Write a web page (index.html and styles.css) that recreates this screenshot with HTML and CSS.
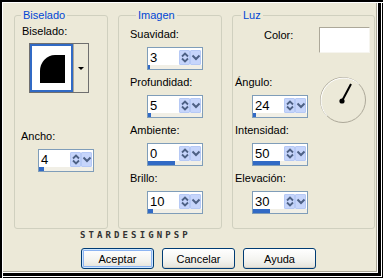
FILE: index.html
```html
<!DOCTYPE html>
<html lang="es">
<head>
    <meta charset="UTF-8">
    <title>Biselado interior</title>
    <link rel="stylesheet" href="styles.css">
</head>
<body>
    <div class="window">
        <div class="groups">
            <!-- Biselado -->
            <fieldset class="group group-bevel">
                <legend>Biselado</legend>
                <div class="label bevel-label">Biselado:</div>
                <div class="preview">
                    <div class="preview-swatch"><div class="bevel-shape"></div></div>
                    <div class="preview-drop"><span class="drop-arrow"></span></div>
                </div>
                <div class="item width-item">
                    <div class="label">Ancho:</div>
                    <div class="spin">
                        <div class="spin-top">
                            <span class="spin-value">4</span>
                            <span class="spin-btn"><svg width="10" height="15" viewBox="0 0 10 15"><path d="M2 6.5L5 3.5L8 6.5M2 8.5L5 11.5L8 8.5" fill="none" stroke="#4d6185" stroke-width="1.8"/></svg></span>
                            <span class="spin-btn"><svg width="10" height="15" viewBox="0 0 10 15"><path d="M1.5 5.5L5 9L8.5 5.5" fill="none" stroke="#4d6185" stroke-width="2"/></svg></span>
                        </div>
                        <div class="spin-track"><div class="spin-fill" style="width:5px"></div></div>
                    </div>
                </div>
            </fieldset>

            <!-- Imagen -->
            <fieldset class="group group-image">
                <legend>Imagen</legend>
                <div class="item">
                    <div class="label">Suavidad:</div>
                    <div class="spin">
                        <div class="spin-top">
                            <span class="spin-value">3</span>
                            <span class="spin-btn"><svg width="10" height="15" viewBox="0 0 10 15"><path d="M2 6.5L5 3.5L8 6.5M2 8.5L5 11.5L8 8.5" fill="none" stroke="#4d6185" stroke-width="1.8"/></svg></span>
                            <span class="spin-btn"><svg width="10" height="15" viewBox="0 0 10 15"><path d="M1.5 5.5L5 9L8.5 5.5" fill="none" stroke="#4d6185" stroke-width="2"/></svg></span>
                        </div>
                        <div class="spin-track"><div class="spin-fill" style="width:2px"></div></div>
                    </div>
                </div>
                <div class="item">
                    <div class="label">Profundidad:</div>
                    <div class="spin">
                        <div class="spin-top">
                            <span class="spin-value">5</span>
                            <span class="spin-btn"><svg width="10" height="15" viewBox="0 0 10 15"><path d="M2 6.5L5 3.5L8 6.5M2 8.5L5 11.5L8 8.5" fill="none" stroke="#4d6185" stroke-width="1.8"/></svg></span>
                            <span class="spin-btn"><svg width="10" height="15" viewBox="0 0 10 15"><path d="M1.5 5.5L5 9L8.5 5.5" fill="none" stroke="#4d6185" stroke-width="2"/></svg></span>
                        </div>
                        <div class="spin-track"><div class="spin-fill" style="width:3px"></div></div>
                    </div>
                </div>
                <div class="item">
                    <div class="label">Ambiente:</div>
                    <div class="spin">
                        <div class="spin-top">
                            <span class="spin-value">0</span>
                            <span class="spin-btn"><svg width="10" height="15" viewBox="0 0 10 15"><path d="M2 6.5L5 3.5L8 6.5M2 8.5L5 11.5L8 8.5" fill="none" stroke="#4d6185" stroke-width="1.8"/></svg></span>
                            <span class="spin-btn"><svg width="10" height="15" viewBox="0 0 10 15"><path d="M1.5 5.5L5 9L8.5 5.5" fill="none" stroke="#4d6185" stroke-width="2"/></svg></span>
                        </div>
                        <div class="spin-track"><div class="spin-fill" style="width:27px"></div></div>
                    </div>
                </div>
                <div class="item">
                    <div class="label">Brillo:</div>
                    <div class="spin">
                        <div class="spin-top">
                            <span class="spin-value">10</span>
                            <span class="spin-btn"><svg width="10" height="15" viewBox="0 0 10 15"><path d="M2 6.5L5 3.5L8 6.5M2 8.5L5 11.5L8 8.5" fill="none" stroke="#4d6185" stroke-width="1.8"/></svg></span>
                            <span class="spin-btn"><svg width="10" height="15" viewBox="0 0 10 15"><path d="M1.5 5.5L5 9L8.5 5.5" fill="none" stroke="#4d6185" stroke-width="2"/></svg></span>
                        </div>
                        <div class="spin-track"><div class="spin-fill" style="width:5px"></div></div>
                    </div>
                </div>
            </fieldset>

            <!-- Luz -->
            <fieldset class="group group-light">
                <legend>Luz</legend>
                <div class="color-row">
                    <div class="label color-label">Color:</div>
                    <div class="color-swatch"></div>
                </div>
                <div class="angle-row">
                    <div class="item">
                        <div class="label">Ángulo:</div>
                        <div class="spin">
                            <div class="spin-top">
                                <span class="spin-value">24</span>
                                <span class="spin-btn"><svg width="10" height="15" viewBox="0 0 10 15"><path d="M2 6.5L5 3.5L8 6.5M2 8.5L5 11.5L8 8.5" fill="none" stroke="#4d6185" stroke-width="1.8"/></svg></span>
                                <span class="spin-btn"><svg width="10" height="15" viewBox="0 0 10 15"><path d="M1.5 5.5L5 9L8.5 5.5" fill="none" stroke="#4d6185" stroke-width="2"/></svg></span>
                            </div>
                            <div class="spin-track"><div class="spin-fill" style="width:3px"></div></div>
                        </div>
                    </div>
                    <svg class="dial" width="48" height="48" viewBox="0 0 48 48">
                        <circle cx="24" cy="24" r="22.5" fill="none" stroke="#aca899" stroke-width="1"/>
                        <path d="M8.1 39.9A22.5 22.5 0 0 1 39.9 8.1" fill="none" stroke="#fff" stroke-width="1"/>
                        <line x1="23" y1="25" x2="32" y2="8" stroke="#000" stroke-width="2"/>
                        <circle cx="23" cy="25" r="2.6" fill="#000"/>
                    </svg>
                </div>
                <div class="item">
                    <div class="label">Intensidad:</div>
                    <div class="spin">
                        <div class="spin-top">
                            <span class="spin-value">50</span>
                            <span class="spin-btn"><svg width="10" height="15" viewBox="0 0 10 15"><path d="M2 6.5L5 3.5L8 6.5M2 8.5L5 11.5L8 8.5" fill="none" stroke="#4d6185" stroke-width="1.8"/></svg></span>
                            <span class="spin-btn"><svg width="10" height="15" viewBox="0 0 10 15"><path d="M1.5 5.5L5 9L8.5 5.5" fill="none" stroke="#4d6185" stroke-width="2"/></svg></span>
                        </div>
                        <div class="spin-track"><div class="spin-fill" style="width:27px"></div></div>
                    </div>
                </div>
                <div class="item">
                    <div class="label">Elevación:</div>
                    <div class="spin">
                        <div class="spin-top">
                            <span class="spin-value">30</span>
                            <span class="spin-btn"><svg width="10" height="15" viewBox="0 0 10 15"><path d="M2 6.5L5 3.5L8 6.5M2 8.5L5 11.5L8 8.5" fill="none" stroke="#4d6185" stroke-width="1.8"/></svg></span>
                            <span class="spin-btn"><svg width="10" height="15" viewBox="0 0 10 15"><path d="M1.5 5.5L5 9L8.5 5.5" fill="none" stroke="#4d6185" stroke-width="2"/></svg></span>
                        </div>
                        <div class="spin-track"><div class="spin-fill" style="width:17px"></div></div>
                    </div>
                </div>
            </fieldset>
        </div>

        <div class="credit">STARDESIGNPSP</div>

        <div class="buttons">
            <button class="btn btn-default">Aceptar</button>
            <button class="btn">Cancelar</button>
            <button class="btn">Ayuda</button>
        </div>
    </div>
</body>
</html>
```

FILE: styles.css
```css
* {
    box-sizing: border-box;
    margin: 0;
    padding: 0;
}

body {
    font-family: "Liberation Sans", Arial, sans-serif;
    font-size: 11px;
    line-height: 13px;
    color: #000;
    background: #ece9d8;
}

.window {
    width: 383px;
    height: 278px;
    padding: 9px 0 0 14px;
    background: #ece9d8;
    box-shadow:
        inset 2px 2px 0 #000,
        inset 3px 3px 0 #fff,
        inset -1px -1px 0 #000,
        inset -2px -2px 0 #fff,
        inset -5px -5px 0 #000,
        inset -6px -6px 0 #fff,
        inset -7px -7px 0 #aca899;
}

.groups {
    display: flex;
    gap: 10px;
    height: 220px;
}

/* Cuadros de grupo */
.group {
    border: 1px solid #d0d0bf;
    border-radius: 3px;
    min-width: 0;
}

.group legend {
    margin-left: 6px;
    padding: 0 2px;
    color: #0046d5;
    line-height: 13px;
}

.group-bevel { width: 94px; }
.group-image { width: 104px; padding-left: 11px; }
.group-light { width: 143px; padding-left: 2px; }

.label {
    height: 13px;
    white-space: nowrap;
}

.item {
    display: flex;
    flex-direction: column;
    align-items: flex-start;
    margin-top: 6px;
}

.item .label {
    margin-bottom: 6px;
}

.item .spin {
    margin-left: 17px;
}

/* Biselado */
.bevel-label {
    margin: 3px 0 0 7px;
}

.preview {
    display: flex;
    width: 60px;
    height: 50px;
    margin: 5px 0 0 14px;
    border: 1px solid #6f6f6f;
}

.preview-swatch {
    width: 43px;
    background: #fff;
    border: 2px solid #316ac5;
    padding: 9px 0 0 8px;
}

.bevel-shape {
    width: 25px;
    height: 28px;
    background: #000;
    border-top-left-radius: 15px 16px;
}

.preview-drop {
    flex: 1;
    display: flex;
    align-items: center;
    justify-content: center;
    background: #ece9d8;
    border-left: 1px solid #aca899;
}

.drop-arrow {
    width: 0;
    height: 0;
    border-left: 3px solid transparent;
    border-right: 3px solid transparent;
    border-top: 3px solid #000;
}

.width-item {
    margin-top: 37px;
    margin-left: 6px;
}

/* Campo numerico con flechas */
.spin {
    width: 56px;
    height: 23px;
    border: 1px solid #7f9db9;
    background: #fff;
    display: flex;
    flex-direction: column;
}

.spin-top {
    display: flex;
    align-items: center;
    height: 17px;
    padding: 1px 1px 0 2px;
}

.spin-value {
    flex: 1;
    font-size: 13px;
    line-height: 15px;
}

.spin-btn {
    display: flex;
    align-items: center;
    justify-content: center;
    width: 11px;
    height: 15px;
    background: #c6d5fb;
    border: 1px solid #b6c9f5;
    border-radius: 1px;
}

.spin-btn svg {
    flex: none;
}

.spin-track {
    height: 4px;
    margin-top: auto;
    background: #f1efe6;
}

.spin-fill {
    height: 100%;
    background: #316ac5;
}

/* Luz */
.color-row {
    display: flex;
    align-items: flex-start;
    height: 43px;
    margin-top: 5px;
}

.color-label {
    margin: 2px 0 0 29px;
}

.color-swatch {
    width: 51px;
    height: 26px;
    margin-left: 26px;
    background: #fff;
    border-top: 1px solid #aca899;
    border-left: 1px solid #aca899;
    border-right: 1px solid #f6f5ef;
    border-bottom: 1px solid #f6f5ef;
}

.angle-row {
    display: flex;
    align-items: flex-start;
}

.dial {
    margin: 6px 7px -13px auto;
}

/* Pie */
.credit {
    margin-top: 1px;
    padding-left: 66px;
    height: 10px;
    font-family: "DejaVu Sans Mono", monospace;
    font-weight: bold;
    font-size: 9px;
    line-height: 10px;
    letter-spacing: 3.1px;
    color: #333;
}

.buttons {
    display: flex;
    gap: 8px;
    margin-top: 8px;
    padding-left: 67px;
}

.btn {
    width: 73px;
    height: 21px;
    font-family: "Liberation Sans", Arial, sans-serif;
    font-size: 11px;
    color: #000;
    border: 1px solid #003c74;
    border-radius: 3px;
    background: linear-gradient(#ffffff, #f3f3ef 60%, #e4e2d9);
    box-shadow: inset 0 -1px 0 #d6d0c5;
}

.btn-default {
    box-shadow: inset 0 0 0 1px #cee7ff, inset 0 0 0 2px #8cb4f2, inset 0 -2px 0 #6c9ae8;
}
```
